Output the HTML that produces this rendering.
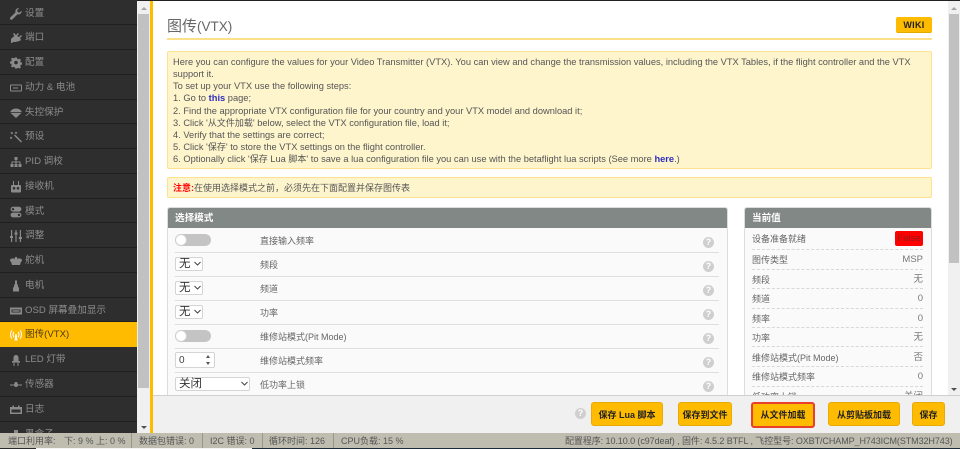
<!DOCTYPE html>
<html><head><meta charset="utf-8">
<style>
*{box-sizing:border-box}
html,body{margin:0;padding:0;width:960px;height:449px;overflow:hidden;background:#fff}
body{position:relative;font-family:"Liberation Sans","Noto Sans CJK SC",sans-serif;font-size:10px;color:#555}
.a{position:absolute;white-space:nowrap}
#side{left:0;top:0;width:137px;height:433px;background:#2e2e2e;overflow:hidden}
.it{position:absolute;left:0;width:137px;height:24.75px;border-bottom:1px solid #1f1f1f;color:#8c8c8c;font-size:9.6px;line-height:26px;padding-left:25px}
.it svg{position:absolute;left:10px;top:7px;width:12px;height:12px;fill:#8a8a8a;stroke:none}
.it.on{background:#ffbb00;color:#4a3a10;border:0}
.it.on svg{fill:#fff}
.sb{position:absolute;background:#f0f0f0}
.th{position:absolute;background:#c1c1c1}
.tu{position:absolute;width:0;height:0;border-left:3px solid transparent;border-right:3px solid transparent;border-bottom:3px solid #a3a3a3}
.td{position:absolute;width:0;height:0;border-left:3px solid transparent;border-right:3px solid transparent;border-top:3px solid #505050}
.note{position:absolute;left:167px;width:765px;background:#fef5cd;border:1px solid #ffe28f;border-radius:2px}
.l{position:absolute;left:173px;color:#555;font-size:9.3px;line-height:12px;white-space:nowrap}
.l b{color:#2e2ebc}
.l span{font-size:9px}
.panel{position:absolute;top:207px;height:200px;background:#fafafa;border:1px solid #dcdcdc;border-radius:3px;overflow:hidden}
.ph{position:absolute;left:0;top:0;right:0;height:20px;background:#828885;color:#fff;font-weight:bold;font-size:9.6px;line-height:21px;padding-left:7px}
.sep{position:absolute;height:1px;background:#dedede}
.dsh{position:absolute;left:752px;width:171px;height:0;border-top:1px dashed #d8d8d8}
.lab{position:absolute;left:260px;font-size:9px;line-height:12px;color:#666;white-space:nowrap}
.rl{position:absolute;left:752px;font-size:9px;line-height:12px;color:#666;white-space:nowrap}
.rv{position:absolute;right:37px;font-size:9.5px;line-height:12px;color:#777;white-space:nowrap}
.q{position:absolute;left:703px;width:11px;height:11px;border-radius:50%;background:#cfcfcf;color:#fff;font-size:9px;font-weight:bold;line-height:11px;text-align:center}
.tg{position:absolute;left:175px;width:36px;height:12px;border-radius:6px;background:#c4c4c4}
.tg i{position:absolute;left:0;top:0;width:12px;height:12px;border-radius:50%;background:#fff;border:1px solid #cfcfcf}
.sel{position:absolute;left:175px;height:14px;background:#fff;border:1px solid #d4d4d4;border-radius:2px;color:#333;font-size:11.5px;line-height:13px;padding-left:3px}
.sel svg{position:absolute;top:3px;width:7px;height:5px;fill:none;stroke:#444;stroke-width:1}
.btn{position:absolute;top:402px;height:24px;background:#ffbb00;border:1px solid #e8ac0a;border-radius:3px;color:#222;font-weight:bold;font-size:9px;line-height:24px;text-align:center;white-space:nowrap}
#st{position:absolute;left:0;top:433px;width:960px;height:15px;background:#bebdb0;color:#555;font-size:9px;line-height:16px}
#st span{position:absolute;white-space:nowrap}
#st u{position:absolute;top:0;width:1px;height:15px;background:#98978c}
</style></head><body>
<div class="a" style="left:0;top:0;width:960px;height:1px;background:#222"></div>

<div id="side" class="a">
<div class="it" style="top:.5px"><svg viewBox="0 0 12 12"><path d="M11.5 2.6 9.6 4.5 7.6 4.1 7.2 2.2 9.2.4C7.4-.2 5.4 1.2 5.4 3.2c0 .4 0 .7.2 1L.4 9.4c-.6.7-.5 1.5 0 2 .6.6 1.4.5 2 0l5.2-5.1c2.2.7 4.5-1.300 3.900-3.700z"/></svg>设置</div>
<div class="it" style="top:25.25px"><svg viewBox="0 0 12 12"><path d="M1 11V7l2-2 1.500-1L3 2l1-1 2 2 2-2 1 1-2 2 2 1 2-2 1 1-2 2 1 2-1.500 1-4 1H3l-1 1z"/></svg>端口</div>
<div class="it" style="top:50px"><svg viewBox="0 0 12 12"><path fill-rule="evenodd" d="M5 .5h2l.3 1.500 1 .4 1.300-.8 1.400 1.400-.8 1.300.4 1 1.400.3v2l-1.400.3-.4 1 .8 1.300-1.400 1.400-1.300-.8-1 .4L7 11.500H5l-.3-1.400-1-.4-1.300.8L1 9.100l.8-1.300-.4-1L0 6.500v-2l1.400-.3.400-1L1 2l1.400-1.400 1.300.8 1-.4zM6 3.800a1.800 1.800 0 1 0 0 3.600 1.800 1.800 0 0 0 0-3.600z"/></svg>配置</div>
<div class="it" style="top:74.75px"><svg viewBox="0 0 12 12"><path fill-rule="evenodd" d="M1 2.500h10a1 1 0 0 1 1 1v5a1 1 0 0 1-1 1H1a1 1 0 0 1-1-1v-5a1 1 0 0 1 1-1zM1 3.500v5h10v-5zM3 5.500h5v1H3z"/></svg>动力 &amp; 电池</div>
<div class="it" style="top:99.5px"><svg viewBox="0 0 12 12"><path d="M6 1.500C3 1.500.8 3 0 5.500l6 5.500 6-5.500C11.200 3 9 1.500 6 1.500z"/><path d="M0 5.500h12" stroke="#2e2e2e" stroke-width=".8"/></svg>失控保护</div>
<div class="it" style="top:124.25px"><svg viewBox="0 0 12 12"><path d="M4 4.500l1-1 7 7-1 1zM1 1l1 .4L3 1l-.3 1 .6 1-1.100-.2L1.500 3.500 1.300 2.400.4 2zM6 .4l.5.800.9.100-.6.700.1.900-.9-.3-.8.400.1-.9-.6-.7.900-.2zM1 5.500l.5.800.9.100-.6.700.1.900-.9-.3-.8.400.1-.9-.6-.7.900-.2z"/></svg>预设</div>
<div class="it" style="top:149px"><svg viewBox="0 0 12 12"><path d="M4.500 1h3v3h-1v1.500H10.500V8H11.500v3h-3V8h1V6.500h-3V8h1v3h-3V8h1V6.500h-3V8h1v3h-3V8h1V5.500H5.500V4h-1z"/></svg>PID 调校</div>
<div class="it" style="top:173.75px"><svg viewBox="0 0 12 12"><path fill-rule="evenodd" d="M3 0h1v4h4V0h1v4h1a1 1 0 0 1 1 1v5.500a1 1 0 0 1-1 1H2a1 1 0 0 1-1-1V5a1 1 0 0 1 1-1h1zM4 6a1.300 1.300 0 1 0 0 2.600A1.300 1.300 0 0 0 4 6zM8 6a1.300 1.300 0 1 0 0 2.600A1.300 1.300 0 0 0 8 6z"/></svg>接收机</div>
<div class="it" style="top:198.5px"><svg viewBox="0 0 12 12"><path fill-rule="evenodd" d="M3 .8h6a2.400 2.400 0 0 1 0 4.800H3A2.400 2.400 0 0 1 3 .8zM3 2a1.200 1.200 0 1 0 0 2.400A1.200 1.200 0 0 0 3 2zM3 6.600h6a2.400 2.400 0 0 1 0 4.800H3a2.400 2.400 0 0 1 0-4.800zM9 7.800a1.200 1.200 0 1 0 0 2.400 1.200 1.200 0 0 0 0-2.400z"/></svg>模式</div>
<div class="it" style="top:223.25px"><svg viewBox="0 0 12 12"><path d="M1 0h1.200v6H3v2H2.200v4H1V8H0V6h1zM5.400 0h1.200v2.500h.9v2h-.9V12H5.400V4.500h-.9v-2h.9zM9.800 0H11v7h1v2h-1v3H9.800V9h-1V7h1z"/></svg>调整</div>
<div class="it" style="top:248px"><svg viewBox="0 0 12 12"><path d="M5 2h2v1.500h4L12 5v1.500h-1L10 10H2L1 6.500H0V5l1-1.500h4z"/></svg>舵机</div>
<div class="it" style="top:272.75px"><svg viewBox="0 0 12 12"><path d="M5 .5h2v3.500l1 1v2l1 .5v4H3V7.500l1-.5V5l1-1z"/></svg>电机</div>
<div class="it" style="top:297.5px"><svg viewBox="0 0 12 12"><path fill-rule="evenodd" d="M0 2.500h12v7H0zM1.500 4.500v3h9v-3z"/><path d="M2.500 5.300h7v1.400h-7z"/></svg>OSD 屏幕叠加显示</div>
<div class="it on" style="top:322.25px;height:25px"><svg viewBox="0 0 12 12"><path d="M5.300 5h1.400l.8 6.500H4.500zM3.500 2.500l.8.600C3.300 4.700 3.300 6.300 4.300 7.900l-.8.600C2.200 6.600 2.200 4.400 3.500 2.500zM8.500 2.500c1.300 1.900 1.300 4.100 0 6l-.8-.600c1-1.600 1-3.200 0-4.800zM1.500 1l.8.600C.6 4.200.6 6.800 2.300 9.400l-.8.600C-.5 7-.5 4 1.500 1zM10.500 1c2 3 2 6 0 9l-.8-.6c1.700-2.600 1.700-5.200 0-7.800z"/></svg>图传(VTX)</div>
<div class="it" style="top:347.25px"><svg viewBox="0 0 12 12"><path d="M3.500 3.500a2.500 2.500 0 0 1 5 0V7H10v1.500H8.500V12h-1V8.500h-3V12h-1V8.500H2V7h1.500z"/></svg>LED 灯带</div>
<div class="it" style="top:372px"><svg viewBox="0 0 12 12"><path d="M0 5.500h4l1-2.500 2 0 1 2.500h4v1H8L7 8H5L4 6.500H0z"/></svg>传感器</div>
<div class="it" style="top:396.75px"><svg viewBox="0 0 12 12"><path fill-rule="evenodd" d="M0 3h12v7H0zM1.500 5.500v3h9v-3z"/><path d="M2.500 1.500h1.500V3H2.500zM8 1.500h1.500V3H8z"/></svg>日志</div>
<div class="it" style="top:421.5px"><svg viewBox="0 0 12 12"><path d="M4 1h4v3h3v3H1V4h3z"/></svg>黑盒子</div>
</div>

<div class="sb" style="left:137px;top:1px;width:13px;height:432px"></div>
<div class="th" style="left:138px;top:14px;width:11px;height:374px"></div>
<div class="tu" style="left:140.500px;top:7px"></div>
<div class="td" style="left:140.500px;top:426px"></div>
<div class="a" style="left:150px;top:1px;width:3px;height:432px;background:#ffbb00"></div>

<div class="a" style="left:167px;top:16px;font-size:15px;line-height:22px;color:#666">图传<span style="font-size:13.5px">(VTX)</span></div>
<div class="a" style="left:167px;top:38px;width:765px;height:2px;background:#ffe08a"></div>
<div class="a" style="left:896px;top:17px;width:36px;height:16px;background:#ffbb00;border-radius:2px;border-bottom:1px solid #e6a900;color:#222;font-weight:bold;font-size:9px;line-height:17px;text-align:center;letter-spacing:.3px">WIKI</div>

<div class="note" style="top:51px;height:118px"></div>
<div class="l" style="top:56px">Here you can configure the values for your Video Transmitter (VTX). You can view and change the transmission values, including the VTX Tables, if the flight controller and the VTX</div>
<div class="l" style="top:68px">support it.</div>
<div class="l" style="top:80px">To set up your VTX use the following steps:</div>
<div class="l" style="top:92px">1. Go to <b>this</b> page;</div>
<div class="l" style="top:105px">2. Find the appropriate VTX configuration file for your country and your VTX model and download it;</div>
<div class="l" style="top:117px">3. Click '<span>从文件加载</span>' below, select the VTX configuration file, load it;</div>
<div class="l" style="top:129px">4. Verify that the settings are correct;</div>
<div class="l" style="top:141px">5. Click '<span>保存</span>' to store the VTX settings on the flight controller.</div>
<div class="l" style="top:153px">6. Optionally click '<span>保存</span> Lua <span>脚本</span>' to save a lua configuration file you can use with the betaflight lua scripts (See more <b>here</b>.)</div>

<div class="note" style="top:177px;height:21px"></div>
<div class="l" style="top:182px;font-size:9px"><span style="color:#f00;font-weight:bold">注意:</span>在使用选择模式之前，必须先在下面配置并保存图传表</div>

<div class="panel" style="left:167px;width:561px"><div class="ph">选择模式</div></div>
<div class="panel" style="left:744px;width:188px"><div class="ph">当前值</div></div>

<div class="sep" style="left:175px;top:252px;width:544px"></div>
<div class="sep" style="left:175px;top:276px;width:544px"></div>
<div class="sep" style="left:175px;top:300px;width:544px"></div>
<div class="sep" style="left:175px;top:324px;width:544px"></div>
<div class="sep" style="left:175px;top:348px;width:544px"></div>
<div class="sep" style="left:175px;top:372px;width:544px"></div>

<div class="tg" style="top:234px"><i></i></div>
<div class="tg" style="top:330px"><i></i></div>
<div class="sel" style="top:257px;width:28px">无<svg style="left:18px" viewBox="0 0 7 5"><path d="M.5 1l3 3 3-3"/></svg></div>
<div class="sel" style="top:281px;width:28px">无<svg style="left:18px" viewBox="0 0 7 5"><path d="M.5 1l3 3 3-3"/></svg></div>
<div class="sel" style="top:305px;width:28px">无<svg style="left:18px" viewBox="0 0 7 5"><path d="M.5 1l3 3 3-3"/></svg></div>
<div class="a" style="left:175px;top:352px;width:40px;height:16px;background:#fff;border:1px solid #d4d4d4;border-radius:2px;color:#444;font-size:10px;line-height:15px;padding-left:3px">0</div>
<div class="a" style="left:206px;top:355px;width:0;height:0;border-left:2.500px solid transparent;border-right:2.500px solid transparent;border-bottom:3px solid #555"></div>
<div class="a" style="left:206px;top:362px;width:0;height:0;border-left:2.500px solid transparent;border-right:2.500px solid transparent;border-top:3px solid #555"></div>
<div class="sel" style="top:377px;width:75px">关闭<svg style="left:65px" viewBox="0 0 7 5"><path d="M.5 1l3 3 3-3"/></svg></div>

<div class="lab" style="top:235px">直接输入频率</div>
<div class="lab" style="top:259px">频段</div>
<div class="lab" style="top:283px">频道</div>
<div class="lab" style="top:307px">功率</div>
<div class="lab" style="top:331px">维修站模式(Pit Mode)</div>
<div class="lab" style="top:355px">维修站模式频率</div>
<div class="lab" style="top:379px">低功率上锁</div>

<div class="q" style="top:237px">?</div>
<div class="q" style="top:261px">?</div>
<div class="q" style="top:285px">?</div>
<div class="q" style="top:309px">?</div>
<div class="q" style="top:333px">?</div>
<div class="q" style="top:357px">?</div>
<div class="q" style="top:381px">?</div>

<div class="dsh" style="top:249px"></div>
<div class="dsh" style="top:269px"></div>
<div class="dsh" style="top:288px"></div>
<div class="dsh" style="top:308px"></div>
<div class="dsh" style="top:327px"></div>
<div class="dsh" style="top:346px"></div>
<div class="dsh" style="top:366px"></div>
<div class="dsh" style="top:386px"></div>

<div class="rl" style="top:233px">设备准备就绪</div>
<div class="a" style="left:895px;top:231px;width:28px;height:15px;background:#f00;border-radius:2px;color:#8c1c1c;font-size:9.5px;line-height:15px;text-align:center;z-index:2">False</div>
<div class="rl" style="top:254px">图传类型</div><div class="rv" style="top:254px">MSP</div>
<div class="rl" style="top:274px">频段</div><div class="rv" style="top:274px">无</div>
<div class="rl" style="top:293px">频道</div><div class="rv" style="top:293px">0</div>
<div class="rl" style="top:313px">频率</div><div class="rv" style="top:313px">0</div>
<div class="rl" style="top:332px">功率</div><div class="rv" style="top:332px">无</div>
<div class="rl" style="top:352px">维修站模式(Pit Mode)</div><div class="rv" style="top:352px">否</div>
<div class="rl" style="top:371px">维修站模式频率</div><div class="rv" style="top:371px">0</div>
<div class="rl" style="top:391px">低功率上锁</div><div class="rv" style="top:391px">关闭</div>

<div class="sb" style="left:948px;top:1px;width:12px;height:394px"></div>
<div class="th" style="left:949px;top:14px;width:10px;height:249px"></div>
<div class="tu" style="left:951px;top:7px"></div>
<div class="td" style="left:951px;top:388px"></div>

<div class="a" style="left:153px;top:395px;width:807px;height:38px;background:#f0f0f0;border-top:1px solid #cfcfcf"></div>
<div class="a" style="left:575px;top:408px;width:11px;height:11px;border-radius:50%;background:#cfcfcf;color:#fff;font-size:9px;font-weight:bold;line-height:11px;text-align:center">?</div>
<div class="btn" style="left:591px;width:72px">保存 Lua 脚本</div>
<div class="btn" style="left:678px;width:54px">保存到文件</div>
<div class="btn" style="left:751px;width:64px;height:26px;border:2px solid #e8402a;line-height:23px">从文件加载</div>
<div class="btn" style="left:828px;width:72px">从剪贴板加载</div>
<div class="btn" style="left:912px;width:33px">保存</div>

<div id="st">
<span style="left:8px">端口利用率:</span><span style="left:64px">下: 9 % 上: 0 %</span>
<u style="left:131px"></u><span style="left:139px">数据包错误: 0</span>
<u style="left:202px"></u><span style="left:210px">I2C 错误: 0</span>
<u style="left:262px"></u><span style="left:269px">循环时间: 126</span>
<u style="left:333px"></u><span style="left:341px">CPU负载: 15 %</span>
<span style="left:565px;letter-spacing:-.08px">配置程序: 10.10.0 (c97deaf) , 固件: 4.5.2 BTFL , 飞控型号: OXBT/CHAMP_H743ICM(STM32H743)</span>
</div>
<div class="a" style="left:0;top:448px;width:36px;height:1px;background:#2a2a2a"></div>
<div class="a" style="left:36px;top:448px;width:216px;height:1px;background:#f4f4f4"></div>
<div class="a" style="left:252px;top:448px;width:708px;height:1px;background:#1c2b3a"></div>
</body></html>
